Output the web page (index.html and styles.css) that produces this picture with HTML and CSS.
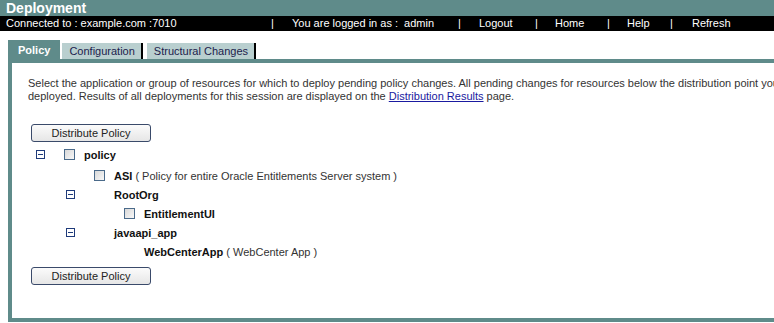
FILE: index.html
```html
<!DOCTYPE html>
<html>
<head>
<meta charset="utf-8">
<link rel="stylesheet" href="styles.css">
</head>
<body>
<div class="titlebar">Deployment</div>
<div class="statusbar">
  <span class="conn">Connected to : example.com :7010</span>
  <span class="sep">|</span>
  <span class="item">You are logged in as : &nbsp;admin</span>
  <span class="sep">|</span>
  <span class="item">Logout</span>
  <span class="sep">|</span>
  <span class="item">Home</span>
  <span class="sep">|</span>
  <span class="item">Help</span>
  <span class="sep">|</span>
  <span class="item">Refresh</span>
</div>
<div class="tabs">
  <div class="tab active">Policy</div>
  <div class="tab">Configuration</div>
  <div class="tab">Structural Changes</div>
</div>
<div class="panel">
  <p class="intro">Select the application or group of resources for which to deploy pending policy changes. All pending changes for resources below the distribution point you select will be deployed. Results of all deployments for this session are displayed on the <a href="#">Distribution Results</a> page.</p>
  <button class="btn">Distribute Policy</button>
  <div class="tree">
    <div class="row lvl0"><span class="tog"><span class="minus"></span></span><span class="chk"><span class="box"></span></span><span class="name">policy</span></div>
    <div class="row lvl1 first-child"><span class="tog"></span><span class="chk"><span class="box"></span></span><span class="name">ASI</span><span class="desc">&nbsp;( Policy for entire Oracle Entitlements Server system )</span></div>
    <div class="row lvl1"><span class="tog"><span class="minus"></span></span><span class="chk"></span><span class="name">RootOrg</span></div>
    <div class="row lvl2"><span class="tog"></span><span class="chk"><span class="box"></span></span><span class="name">EntitlementUI</span></div>
    <div class="row lvl1"><span class="tog"><span class="minus"></span></span><span class="chk"></span><span class="name">javaapi_app</span></div>
    <div class="row lvl2"><span class="tog"></span><span class="chk"></span><span class="name">WebCenterApp</span><span class="desc">&nbsp;( WebCenter App )</span></div>
  </div>
  <button class="btn btn-bottom">Distribute Policy</button>
</div>
</body>
</html>
```

FILE: styles.css
```css
html, body {
  margin: 0;
  padding: 0;
  overflow: hidden;
  background: #fff;
  font-family: "Liberation Sans", Arial, sans-serif;
}
.titlebar {
  height: 16px;
  line-height: 16px;
  background: #5f8b8a;
  color: #fff;
  font-weight: bold;
  font-size: 14px;
  padding-left: 6px;
}
.statusbar {
  height: 15px;
  background: #000;
  color: #fff;
  font-size: 11px;
  line-height: 15px;
  display: grid;
  grid-template-columns: 271px 21px 166px 21px 56px 20px 52px 20px 43px 22px auto;
  white-space: nowrap;
}
.conn {
  padding-left: 6px;
}
.tabs {
  margin-top: 9px;
  padding-left: 8px;
  display: flex;
  align-items: flex-end;
  height: 19px;
}
.tab {
  font-size: 11px;
  color: #1c1c4c;
  background: #b9cfcf;
  height: 16px;
  line-height: 16px;
  padding: 0 6px 0 7px;
  border-right: 2px solid #000;
  margin-right: 4px;
}
.tab.active {
  background: #5f8b8a;
  color: #fff;
  font-weight: bold;
  height: 19px;
  line-height: 21px;
  padding: 0 10px;
  border-right: none;
  margin-right: 2px;
}
.panel {
  width: 1000px;
  height: 263px;
  border: 4px solid #5f8b8a;
  border-right: none;
  margin-left: 8px;
  box-sizing: border-box;
  padding: 14px 0 0 16px;
}
.intro {
  margin: 0;
  width: 850px;
  font-size: 11px;
  line-height: 13px;
  color: #333;
}
.intro a {
  color: #1a1aa0;
}
.btn {
  margin: 21px 0 0 3px;
  width: 120px;
  height: 18px;
  padding: 0;
  font-family: "Liberation Sans", Arial, sans-serif;
  font-size: 11px;
  color: #222;
  border: 1px solid #3a4a6a;
  border-radius: 3px;
  background: linear-gradient(#fbfbfb, #e6e6e6);
  display: block;
}
.btn-bottom {
  margin-top: 6px;
}
.tree {
  margin: 3px 0 0 0;
}
.row {
  display: flex;
  align-items: center;
  height: 19px;
  font-size: 11px;
}
.row.first-child {
  margin-top: 2px;
}
.lvl0 { padding-left: 8px; }
.lvl1 { padding-left: 38px; }
.lvl2 { padding-left: 68px; }
.tog {
  flex: 0 0 28px;
  display: flex;
  align-items: center;
}
.chk {
  flex: 0 0 20px;
  display: flex;
  align-items: center;
}
.minus {
  width: 7px;
  height: 7px;
  border: 1px solid #1e3a7a;
  position: relative;
  background: #fff;
}
.minus::after {
  content: "";
  position: absolute;
  left: 1px;
  top: 3px;
  width: 5px;
  height: 1px;
  background: #1e3a7a;
}
.box {
  width: 9px;
  height: 9px;
  border: 1px solid #4a6a8a;
  background: linear-gradient(135deg, #d8d8d8, #f8f8f8);
}
.name {
  font-weight: bold;
  color: #111;
  font-size: 11px;
}
.desc {
  color: #333;
}
```
